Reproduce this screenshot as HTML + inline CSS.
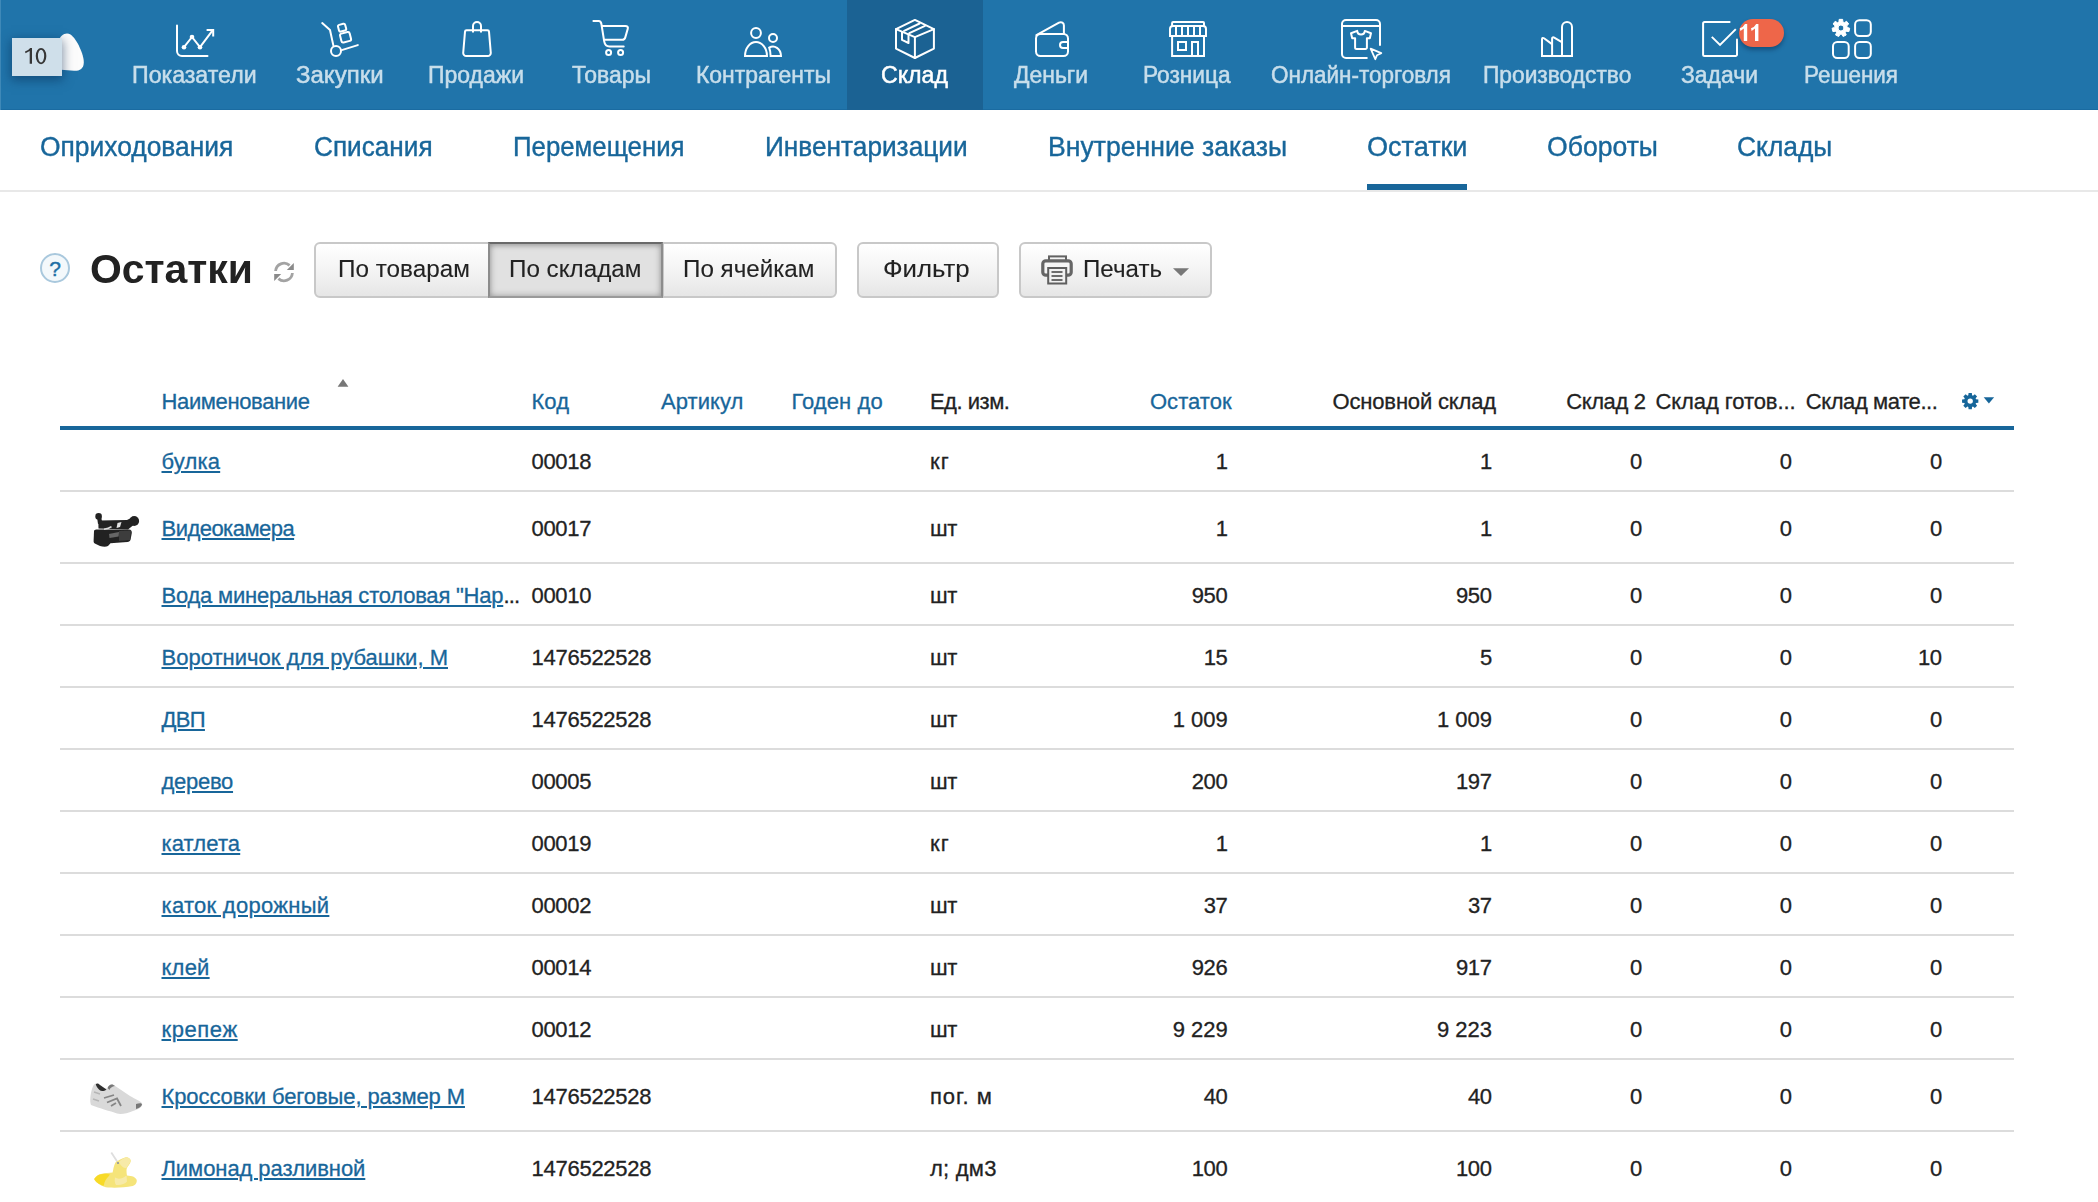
<!DOCTYPE html>
<html lang="ru">
<head>
<meta charset="utf-8">
<title>Остатки</title>
<style>
*{box-sizing:border-box;margin:0;padding:0}
html,body{width:2098px;height:1202px;overflow:hidden;background:#fff}
body{font-family:"Liberation Sans",sans-serif;font-feature-settings:"liga" 0;color:#222;position:relative}
.t{position:absolute;white-space:nowrap;-webkit-text-stroke:0.3px currentColor}
/* top nav */
#top{position:absolute;left:0;top:0;width:2098px;height:110px;background:#2074aa;border-bottom:1px solid #1a6ba1}
#edge{position:absolute;left:0;top:0;width:1px;height:110px;background:#3f89b8}
#act{position:absolute;left:847px;top:0;width:136px;height:110px;background:#1b6293}
#ico{position:absolute;left:0;top:0}
#cnt{position:absolute;left:12px;top:38px;width:50px;height:38px;background:#cfdfea;color:#3a3a3a;font-size:21.5px;line-height:38px;text-align:center;box-shadow:0 3px 10px 1px rgba(5,40,80,.5)}
#cnt svg{display:block}
#badge{position:absolute;left:1739px;top:19px;width:45px;height:28px;border-radius:14px;background:#ee6649;box-shadow:0 3px 4px rgba(0,20,50,.35)}
#bnum{position:absolute;left:1738px;top:18px}
.nv{color:#c8deeb;-webkit-text-stroke:0.5px currentColor}
.nv.on{color:#fff}
/* sub nav */
#subline{position:absolute;left:0;top:190px;width:2098px;height:2px;background:#e8e8e8}
#subul{position:absolute;left:1367px;top:184px;width:100px;height:6px;background:#18669a}
.sb{color:#18669a;-webkit-text-stroke:0.4px currentColor}
/* title row */
#help{position:absolute;left:40px;top:253px;width:30px;height:30px;border:2px solid #a9c8dd;border-radius:50%;color:#1f6fa5;font-size:21px;line-height:27px;-webkit-text-stroke:0.4px #1f6fa5;text-align:center;background:#f3f8fb}
.h1{color:#222;-webkit-text-stroke:0}
.btn{position:absolute;top:242px;height:56px;border:2px solid #c8c8c8;background:linear-gradient(#ffffff 0%,#f4f4f4 50%,#e6e6e6 100%)}
.btn.on{background:#e1e1e1;border-color:#8c8c8c;border-top-color:#6a6a6a;border-bottom-color:#9a9a9a;box-shadow:inset 0 0 7px rgba(0,0,0,.3),inset 0 2px 4px rgba(0,0,0,.12)}
.bt{color:#222;-webkit-text-stroke:0.1px currentColor}
/* table */
.hb{color:#18669a}
.tx{color:#222}
.lk{color:#18669a;text-decoration:underline}
#thl{position:absolute;left:60px;top:426px;width:1954px;height:4px;background:#18669a}
.hl{position:absolute;left:60px;width:1954px;height:2px;background:#dcdcdc}
#misc{position:absolute;left:0;top:0;pointer-events:none}
</style>
</head>
<body>
<div id="top"><div id="edge"></div><div id="act"></div>
<svg id="ico" width="2098" height="110" viewBox="0 0 2098 110" fill="none" stroke="#fff" stroke-width="2" stroke-linecap="round" stroke-linejoin="round">
<!-- egg -->
<path d="M58 42C60 35 66 31.5 70.5 34.5C77 39 84 55 83.8 62.5C83.6 69 79.5 71 74 70.8L58 69.5Z" fill="#fcfcfc" stroke="none"/>
<!-- pokazateli -->
<path d="M177 25.5V51a5 5 0 0 0 5 5H207.5"/>
<path d="M184 47.2L192 37L200 47.2L212.6 30.4"/>
<path d="M206.6 30H213.2V36.6" stroke-linecap="butt" stroke-linejoin="miter"/>
<circle cx="184" cy="47.2" r="2.3" fill="#fff" stroke="none"/><circle cx="192" cy="37" r="2.3" fill="#fff" stroke="none"/><circle cx="200" cy="47.2" r="2.3" fill="#fff" stroke="none"/>
<!-- zakupki -->
<path d="M322.2 23.1L330 30L333.4 45.6"/>
<circle cx="336" cy="51" r="5"/>
<path d="M341.7 50.1L357.8 45.1"/>
<rect x="338.4" y="24.2" width="7.4" height="6.9" rx="1.6" transform="rotate(-15 342.1 27.65)"/>
<rect x="340.6" y="32.7" width="9.9" height="9.1" rx="1.8" transform="rotate(-14 345.55 37.25)"/>
<!-- prodazhi -->
<path d="M466.5 30.2H487.5a1.5 1.5 0 0 1 1.5 1.4L490.8 53a3 3 0 0 1 -3 3H466.2a3 3 0 0 1 -3 -3L465 31.6a1.5 1.5 0 0 1 1.5 -1.4Z"/>
<path d="M473 32.6V26.1a4 4 0 0 1 8 0V32.6" stroke-linecap="butt"/>
<!-- tovary -->
<path d="M593.4 21H598.6C600.6 21 601.2 22.6 601.4 24L604.2 41.3C604.8 45 606.6 46.4 609.5 46.4H623.7"/>
<path d="M602.2 26.1H625.4C627.4 26.1 628.3 27 627.8 28.6L625.2 37.6C624.7 39.2 623.8 39.7 622.4 39.7H604.6"/>
<circle cx="608.6" cy="52.4" r="2.5"/><circle cx="620.6" cy="52.4" r="2.5"/>
<!-- kontragenty -->
<circle cx="756" cy="33" r="4.9"/>
<path d="M745 56A11 14 0 0 1 767 56Z" stroke-linejoin="miter"/>
<circle cx="773" cy="38" r="4"/>
<path d="M770.6 56H781A8 9.8 0 0 0 769.2 47.7C770.2 50.5 770.6 53 770.6 56Z" stroke-linejoin="miter"/>
<!-- sklad -->
<path d="M914.9 19.9L933.9 29.1V48.6L914.9 58L896 48.6V29.1Z"/>
<path d="M896 29.1L914.9 37.2L933.9 29.1M914.9 37.2V58"/>
<path d="M904.1 30.9L919.6 23.5M909.4 33.2L925 25.8"/>
<path d="M902 31.2V39.9L908.5 43V33.6" stroke-linecap="butt"/>
<!-- dengi -->
<rect x="1036" y="34" width="32" height="22" rx="4.5"/>
<path d="M1068 42H1063a3 3 0 0 0 0 6H1068" stroke-linecap="butt"/>
<path d="M1036.4 35.2L1059 22.7C1061.6 21.4 1063.9 23 1063.9 25.6V34"/>
<!-- roznica -->
<path d="M1172.1 26V23a1 1 0 0 1 1 -1H1203a1 1 0 0 1 1 1V26" stroke-linecap="butt"/>
<path d="M1170 36V29a3 3 0 0 1 3 -3H1203a3 3 0 0 1 3 3V36Z" stroke-linejoin="miter"/>
<path d="M1176 26V36M1182 26V36M1188 26V36M1194 26V36M1200 26V36" stroke-linecap="butt"/>
<path d="M1172.1 36V56H1204V36" stroke-linecap="butt" stroke-linejoin="miter"/>
<rect x="1178" y="42" width="8" height="8" stroke-linejoin="miter"/>
<path d="M1192 56V42H1198V56" stroke-linecap="butt" stroke-linejoin="miter"/>
<!-- online -->
<path d="M1366.8 58H1346a4 4 0 0 1 -4 -4V24.1a4 4 0 0 1 4 -4H1376a4 4 0 0 1 4 4V45" />
<path d="M1342 26.1H1380" stroke-linecap="butt"/>
<path d="M1357.2 30.9C1357.6 35.8 1364.4 35.8 1364.8 30.9L1371 33.2L1369.8 38.2H1366.9V47.5a1.5 1.5 0 0 1 -1.5 1.5H1356.6a1.5 1.5 0 0 1 -1.5 -1.5V38.2H1352.2L1351 33.2Z"/>
<path d="M1370.6 48.7L1381.3 53.2L1377 55.2L1375.3 59.2Z" stroke-width="1.8"/>
<!-- proizvodstvo -->
<path d="M1542 56V39.2C1542 37.9 1543 37.6 1544 38.3L1551.3 43.6" />
<path d="M1552.1 56V38.6C1552.1 37.4 1553.2 37 1554.2 37.6L1561.4 41.9" />
<path d="M1562 56V27a5 5 0 0 1 10 0V56" stroke-linecap="butt"/>
<path d="M1541 56H1573" stroke-linecap="butt"/>
<!-- zadachi -->
<path d="M1729.6 22.1H1704.6a1.5 1.5 0 0 0 -1.5 1.5V54.4a1.5 1.5 0 0 0 1.5 1.5H1735.5a1.5 1.5 0 0 0 1.5 -1.5V39.6"/>
<path d="M1711.8 36.9L1720 44.9L1735.8 29.1" stroke-linecap="butt" stroke-linejoin="miter"/>
<!-- resheniya -->
<rect x="1855.1" y="20.2" width="15.7" height="15.7" rx="4.2"/>
<rect x="1833" y="42.1" width="15.7" height="15.9" rx="4.2"/>
<rect x="1855.1" y="42.1" width="15.7" height="15.9" rx="4.2"/>
<path d="M1838.90 22.03 L1839.17 19.37 L1842.63 19.37 L1842.90 22.03 L1844.32 22.71 L1846.57 21.27 L1848.72 23.97 L1846.82 25.84 L1847.17 27.38 L1849.70 28.24 L1848.93 31.60 L1846.28 31.28 L1845.29 32.51 L1846.20 35.03 L1843.09 36.52 L1841.69 34.25 L1840.11 34.25 L1838.71 36.52 L1835.60 35.03 L1836.51 32.51 L1835.52 31.28 L1832.87 31.60 L1832.10 28.24 L1834.63 27.38 L1834.98 25.84 L1833.08 23.97 L1835.23 21.27 L1837.48 22.71Z M1837.90 28.00a3.0 3.0 0 1 0 6.0 0a3.0 3.0 0 1 0 -6.0 0Z" fill="#fff" stroke="#fff" stroke-width="1" stroke-linejoin="round" fill-rule="evenodd"/>
</svg>

<div id="cnt"><svg width="50" height="38" viewBox="12 38 50 38"><path d="M32 48.1V63.8H29.7V51.1L25.5 53.3L25 51.6Q28.6 50.4 30.2 48.1Z" fill="#363636"/><path d="M35.75 56.05a5.3 8.15 0 1 0 10.6 0a5.3 8.15 0 1 0 -10.6 0ZM37.95 56.05a3.1 6.35 0 1 1 6.2 0a3.1 6.35 0 1 1 -6.2 0Z" fill="#363636" fill-rule="evenodd"/></svg></div>
<div id="badge"></div><svg id="bnum" width="30" height="28" viewBox="1738 18 30 28"><path id="one" d="M1747.2 24V40.9H1743.8V28.4L1740.4 30.9L1739.8 28.3Q1743.6 27 1745 24Z" fill="#fff"/><path d="M1758.4 24V40.9H1755V28.4L1751.6 30.9L1751 28.3Q1754.8 27 1756.2 24Z" fill="#fff"/></svg>
</div>
<div id="subline"></div><div id="subul"></div>
<div id="help">?</div>
<div class="btn" style="left:314px;width:176px;border-radius:6px 0 0 6px"></div>
<div class="btn" style="left:662px;width:175px;border-radius:0 6px 6px 0"></div>
<div class="btn on" style="left:488px;width:175px"></div>
<div class="btn" style="left:857px;width:142px;border-radius:6px"></div>
<div class="btn" style="left:1019px;width:193px;border-radius:6px"></div>
<div id="thl"></div>
<div class="hl" style="top:490px"></div><div class="hl" style="top:562px"></div><div class="hl" style="top:624px"></div><div class="hl" style="top:686px"></div><div class="hl" style="top:748px"></div><div class="hl" style="top:810px"></div><div class="hl" style="top:872px"></div><div class="hl" style="top:934px"></div><div class="hl" style="top:996px"></div><div class="hl" style="top:1058px"></div><div class="hl" style="top:1130px"></div>
<div class="t nv" style="left:131.5px;top:60.2px;font-size:23px;line-height:30px;transform:scaleX(1.0062);transform-origin:0 0;">Показатели</div>
<div class="t nv" style="left:295.9px;top:60.2px;font-size:23px;line-height:30px;transform:scaleX(1.0444);transform-origin:0 0;">Закупки</div>
<div class="t nv" style="left:427.5px;top:60.2px;font-size:23px;line-height:30px;transform:scaleX(0.9993);transform-origin:0 0;">Продажи</div>
<div class="t nv" style="left:571.9px;top:60.2px;font-size:23px;line-height:30px;transform:scaleX(0.9972);transform-origin:0 0;">Товары</div>
<div class="t nv" style="left:695.9px;top:60.2px;font-size:23px;line-height:30px;transform:scaleX(0.9959);transform-origin:0 0;">Контрагенты</div>
<div class="t nv on" style="left:881.2px;top:60.2px;font-size:23px;line-height:30px;transform:scaleX(1.0048);transform-origin:0 0;">Склад</div>
<div class="t nv" style="left:1013.5px;top:60.2px;font-size:23px;line-height:30px;transform:scaleX(0.9960);transform-origin:0 0;">Деньги</div>
<div class="t nv" style="left:1142.5px;top:60.2px;font-size:23px;line-height:30px;transform:scaleX(0.9850);transform-origin:0 0;">Розница</div>
<div class="t nv" style="left:1270.9px;top:60.2px;font-size:23px;line-height:30px;transform:scaleX(0.9771);transform-origin:0 0;">Онлайн-торговля</div>
<div class="t nv" style="left:1482.5px;top:60.2px;font-size:23px;line-height:30px;transform:scaleX(0.9889);transform-origin:0 0;">Производство</div>
<div class="t nv" style="left:1681.0px;top:60.2px;font-size:23px;line-height:30px;transform:scaleX(0.9970);transform-origin:0 0;">Задачи</div>
<div class="t nv" style="left:1803.5px;top:60.2px;font-size:23px;line-height:30px;transform:scaleX(0.9754);transform-origin:0 0;">Решения</div>
<div class="t sb" style="left:40.2px;top:128.7px;font-size:27.5px;line-height:36px;transform:scaleX(0.9600);transform-origin:0 0;">Оприходования</div>
<div class="t sb" style="left:314.0px;top:128.7px;font-size:27.5px;line-height:36px;transform:scaleX(0.9518);transform-origin:0 0;">Списания</div>
<div class="t sb" style="left:512.7px;top:128.7px;font-size:27.5px;line-height:36px;transform:scaleX(0.9382);transform-origin:0 0;">Перемещения</div>
<div class="t sb" style="left:764.7px;top:128.7px;font-size:27.5px;line-height:36px;transform:scaleX(0.9540);transform-origin:0 0;">Инвентаризации</div>
<div class="t sb" style="left:1047.9px;top:128.7px;font-size:27.5px;line-height:36px;transform:scaleX(0.9679);transform-origin:0 0;">Внутренние заказы</div>
<div class="t sb" style="left:1366.5px;top:128.7px;font-size:27.5px;line-height:36px;transform:scaleX(0.9842);transform-origin:0 0;">Остатки</div>
<div class="t sb" style="left:1546.6px;top:128.7px;font-size:27.5px;line-height:36px;transform:scaleX(0.9662);transform-origin:0 0;">Обороты</div>
<div class="t sb" style="left:1737.0px;top:128.7px;font-size:27.5px;line-height:36px;transform:scaleX(0.9591);transform-origin:0 0;">Склады</div>
<div class="t h1" style="left:90.4px;top:243.2px;font-size:41px;line-height:53px;transform:scaleX(0.9976);transform-origin:0 0;font-weight:700;">Остатки</div>
<div class="t bt" style="left:338.2px;top:253.4px;font-size:24.3px;line-height:32px;transform:scaleX(0.9994);transform-origin:0 0;">По товарам</div>
<div class="t bt" style="left:508.5px;top:253.4px;font-size:24.3px;line-height:32px;transform:scaleX(0.9972);transform-origin:0 0;">По складам</div>
<div class="t bt" style="left:683.2px;top:253.4px;font-size:24.3px;line-height:32px;transform:scaleX(0.9953);transform-origin:0 0;">По ячейкам</div>
<div class="t bt" style="left:883.4px;top:253.4px;font-size:24.3px;line-height:32px;transform:scaleX(1.0622);transform-origin:0 0;">Фильтр</div>
<div class="t bt" style="left:1082.8px;top:253.4px;font-size:24.3px;line-height:32px;transform:scaleX(0.9925);transform-origin:0 0;">Печать</div>
<div class="t hb" style="left:161.5px;top:386.8px;font-size:22px;line-height:29px;letter-spacing:-0.37px;">Наименование</div>
<div class="t hb" style="left:531.5px;top:386.8px;font-size:22px;line-height:29px;letter-spacing:0.05px;">Код</div>
<div class="t hb" style="left:660.9px;top:386.8px;font-size:22px;line-height:29px;letter-spacing:0.08px;">Артикул</div>
<div class="t hb" style="left:791.5px;top:386.8px;font-size:22px;line-height:29px;letter-spacing:0.08px;">Годен до</div>
<div class="t tx" style="left:929.9px;top:386.8px;font-size:22px;line-height:29px;letter-spacing:-0.47px;">Ед. изм.</div>
<div class="t hb" style="left:1149.9px;top:386.8px;font-size:22px;line-height:29px;letter-spacing:0.07px;">Остаток</div>
<div class="t tx" style="left:1332.5px;top:386.8px;font-size:22px;line-height:29px;letter-spacing:-0.16px;">Основной склад</div>
<div class="t tx" style="left:1566.2px;top:386.8px;font-size:22px;line-height:29px;letter-spacing:-0.39px;">Склад 2</div>
<div class="t tx" style="left:1655.4px;top:386.8px;font-size:22px;line-height:29px;letter-spacing:-0.07px;">Склад готов...</div>
<div class="t tx" style="left:1805.7px;top:386.8px;font-size:22px;line-height:29px;letter-spacing:-0.40px;">Склад мате...</div>
<div class="t lk" style="left:161.5px;top:446.7px;font-size:22px;line-height:29px;letter-spacing:0.17px;">булка</div>
<div class="t tx" style="left:531.5px;top:446.7px;font-size:22px;line-height:29px;letter-spacing:-0.30px;">00018</div>
<div class="t tx" style="left:929.9px;top:446.7px;font-size:22px;line-height:29px;letter-spacing:1.20px;">кг</div>
<div class="t tx" style="left:1215.7px;top:446.7px;font-size:22px;line-height:29px;">1</div>
<div class="t tx" style="left:1479.9px;top:446.7px;font-size:22px;line-height:29px;">1</div>
<div class="t tx" style="left:1629.9px;top:446.7px;font-size:22px;line-height:29px;">0</div>
<div class="t tx" style="left:1779.7px;top:446.7px;font-size:22px;line-height:29px;">0</div>
<div class="t tx" style="left:1929.9px;top:446.7px;font-size:22px;line-height:29px;">0</div>
<div class="t lk" style="left:161.5px;top:513.7px;font-size:22px;line-height:29px;letter-spacing:-0.53px;">Видеокамера</div>
<div class="t tx" style="left:531.5px;top:513.7px;font-size:22px;line-height:29px;letter-spacing:-0.30px;">00017</div>
<div class="t tx" style="left:929.9px;top:513.7px;font-size:22px;line-height:29px;letter-spacing:-0.23px;">шт</div>
<div class="t tx" style="left:1215.7px;top:513.7px;font-size:22px;line-height:29px;">1</div>
<div class="t tx" style="left:1479.9px;top:513.7px;font-size:22px;line-height:29px;">1</div>
<div class="t tx" style="left:1629.9px;top:513.7px;font-size:22px;line-height:29px;">0</div>
<div class="t tx" style="left:1779.7px;top:513.7px;font-size:22px;line-height:29px;">0</div>
<div class="t tx" style="left:1929.9px;top:513.7px;font-size:22px;line-height:29px;">0</div>
<div class="t lk" style="left:161.5px;top:580.7px;font-size:22px;line-height:29px;letter-spacing:-0.22px;">Вода минеральная столовая "Нар</div>
<div class="t tx" style="left:503.4px;top:580.7px;font-size:22px;line-height:29px;letter-spacing:-0.87px;">...</div>
<div class="t tx" style="left:531.5px;top:580.7px;font-size:22px;line-height:29px;letter-spacing:-0.30px;">00010</div>
<div class="t tx" style="left:929.9px;top:580.7px;font-size:22px;line-height:29px;letter-spacing:-0.23px;">шт</div>
<div class="t tx" style="left:1191.7px;top:580.7px;font-size:22px;line-height:29px;letter-spacing:-0.36px;">950</div>
<div class="t tx" style="left:1455.9px;top:580.7px;font-size:22px;line-height:29px;letter-spacing:-0.36px;">950</div>
<div class="t tx" style="left:1629.9px;top:580.7px;font-size:22px;line-height:29px;">0</div>
<div class="t tx" style="left:1779.7px;top:580.7px;font-size:22px;line-height:29px;">0</div>
<div class="t tx" style="left:1929.9px;top:580.7px;font-size:22px;line-height:29px;">0</div>
<div class="t lk" style="left:161.5px;top:642.7px;font-size:22px;line-height:29px;letter-spacing:0.01px;">Воротничок для рубашки, М</div>
<div class="t tx" style="left:531.5px;top:642.7px;font-size:22px;line-height:29px;letter-spacing:-0.26px;">1476522528</div>
<div class="t tx" style="left:929.9px;top:642.7px;font-size:22px;line-height:29px;letter-spacing:-0.23px;">шт</div>
<div class="t tx" style="left:1203.7px;top:642.7px;font-size:22px;line-height:29px;letter-spacing:-0.48px;">15</div>
<div class="t tx" style="left:1479.9px;top:642.7px;font-size:22px;line-height:29px;">5</div>
<div class="t tx" style="left:1629.9px;top:642.7px;font-size:22px;line-height:29px;">0</div>
<div class="t tx" style="left:1779.7px;top:642.7px;font-size:22px;line-height:29px;">0</div>
<div class="t tx" style="left:1917.9px;top:642.7px;font-size:22px;line-height:29px;letter-spacing:-0.48px;">10</div>
<div class="t lk" style="left:161.5px;top:704.7px;font-size:22px;line-height:29px;letter-spacing:-0.65px;">ДВП</div>
<div class="t tx" style="left:531.5px;top:704.7px;font-size:22px;line-height:29px;letter-spacing:-0.26px;">1476522528</div>
<div class="t tx" style="left:929.9px;top:704.7px;font-size:22px;line-height:29px;letter-spacing:-0.23px;">шт</div>
<div class="t tx" style="left:1172.8px;top:704.7px;font-size:22px;line-height:29px;letter-spacing:-0.04px;">1 009</div>
<div class="t tx" style="left:1437.0px;top:704.7px;font-size:22px;line-height:29px;letter-spacing:-0.04px;">1 009</div>
<div class="t tx" style="left:1629.9px;top:704.7px;font-size:22px;line-height:29px;">0</div>
<div class="t tx" style="left:1779.7px;top:704.7px;font-size:22px;line-height:29px;">0</div>
<div class="t tx" style="left:1929.9px;top:704.7px;font-size:22px;line-height:29px;">0</div>
<div class="t lk" style="left:161.5px;top:766.7px;font-size:22px;line-height:29px;letter-spacing:-0.28px;">дерево</div>
<div class="t tx" style="left:531.5px;top:766.7px;font-size:22px;line-height:29px;letter-spacing:-0.30px;">00005</div>
<div class="t tx" style="left:929.9px;top:766.7px;font-size:22px;line-height:29px;letter-spacing:-0.23px;">шт</div>
<div class="t tx" style="left:1191.7px;top:766.7px;font-size:22px;line-height:29px;letter-spacing:-0.36px;">200</div>
<div class="t tx" style="left:1455.9px;top:766.7px;font-size:22px;line-height:29px;letter-spacing:-0.36px;">197</div>
<div class="t tx" style="left:1629.9px;top:766.7px;font-size:22px;line-height:29px;">0</div>
<div class="t tx" style="left:1779.7px;top:766.7px;font-size:22px;line-height:29px;">0</div>
<div class="t tx" style="left:1929.9px;top:766.7px;font-size:22px;line-height:29px;">0</div>
<div class="t lk" style="left:161.5px;top:828.7px;font-size:22px;line-height:29px;letter-spacing:0.12px;">катлета</div>
<div class="t tx" style="left:531.5px;top:828.7px;font-size:22px;line-height:29px;letter-spacing:-0.30px;">00019</div>
<div class="t tx" style="left:929.9px;top:828.7px;font-size:22px;line-height:29px;letter-spacing:1.20px;">кг</div>
<div class="t tx" style="left:1215.7px;top:828.7px;font-size:22px;line-height:29px;">1</div>
<div class="t tx" style="left:1479.9px;top:828.7px;font-size:22px;line-height:29px;">1</div>
<div class="t tx" style="left:1629.9px;top:828.7px;font-size:22px;line-height:29px;">0</div>
<div class="t tx" style="left:1779.7px;top:828.7px;font-size:22px;line-height:29px;">0</div>
<div class="t tx" style="left:1929.9px;top:828.7px;font-size:22px;line-height:29px;">0</div>
<div class="t lk" style="left:161.5px;top:890.7px;font-size:22px;line-height:29px;letter-spacing:0.28px;">каток дорожный</div>
<div class="t tx" style="left:531.5px;top:890.7px;font-size:22px;line-height:29px;letter-spacing:-0.30px;">00002</div>
<div class="t tx" style="left:929.9px;top:890.7px;font-size:22px;line-height:29px;letter-spacing:-0.23px;">шт</div>
<div class="t tx" style="left:1203.7px;top:890.7px;font-size:22px;line-height:29px;letter-spacing:-0.48px;">37</div>
<div class="t tx" style="left:1467.9px;top:890.7px;font-size:22px;line-height:29px;letter-spacing:-0.48px;">37</div>
<div class="t tx" style="left:1629.9px;top:890.7px;font-size:22px;line-height:29px;">0</div>
<div class="t tx" style="left:1779.7px;top:890.7px;font-size:22px;line-height:29px;">0</div>
<div class="t tx" style="left:1929.9px;top:890.7px;font-size:22px;line-height:29px;">0</div>
<div class="t lk" style="left:161.5px;top:952.7px;font-size:22px;line-height:29px;letter-spacing:0.22px;">клей</div>
<div class="t tx" style="left:531.5px;top:952.7px;font-size:22px;line-height:29px;letter-spacing:-0.30px;">00014</div>
<div class="t tx" style="left:929.9px;top:952.7px;font-size:22px;line-height:29px;letter-spacing:-0.23px;">шт</div>
<div class="t tx" style="left:1191.7px;top:952.7px;font-size:22px;line-height:29px;letter-spacing:-0.36px;">926</div>
<div class="t tx" style="left:1455.9px;top:952.7px;font-size:22px;line-height:29px;letter-spacing:-0.36px;">917</div>
<div class="t tx" style="left:1629.9px;top:952.7px;font-size:22px;line-height:29px;">0</div>
<div class="t tx" style="left:1779.7px;top:952.7px;font-size:22px;line-height:29px;">0</div>
<div class="t tx" style="left:1929.9px;top:952.7px;font-size:22px;line-height:29px;">0</div>
<div class="t lk" style="left:161.5px;top:1014.7px;font-size:22px;line-height:29px;letter-spacing:0.58px;">крепеж</div>
<div class="t tx" style="left:531.5px;top:1014.7px;font-size:22px;line-height:29px;letter-spacing:-0.30px;">00012</div>
<div class="t tx" style="left:929.9px;top:1014.7px;font-size:22px;line-height:29px;letter-spacing:-0.23px;">шт</div>
<div class="t tx" style="left:1172.8px;top:1014.7px;font-size:22px;line-height:29px;letter-spacing:-0.04px;">9 229</div>
<div class="t tx" style="left:1437.0px;top:1014.7px;font-size:22px;line-height:29px;letter-spacing:-0.04px;">9 223</div>
<div class="t tx" style="left:1629.9px;top:1014.7px;font-size:22px;line-height:29px;">0</div>
<div class="t tx" style="left:1779.7px;top:1014.7px;font-size:22px;line-height:29px;">0</div>
<div class="t tx" style="left:1929.9px;top:1014.7px;font-size:22px;line-height:29px;">0</div>
<div class="t lk" style="left:161.5px;top:1081.7px;font-size:22px;line-height:29px;letter-spacing:-0.10px;">Кроссовки беговые, размер М</div>
<div class="t tx" style="left:531.5px;top:1081.7px;font-size:22px;line-height:29px;letter-spacing:-0.26px;">1476522528</div>
<div class="t tx" style="left:929.9px;top:1081.7px;font-size:22px;line-height:29px;letter-spacing:1.03px;">пог. м</div>
<div class="t tx" style="left:1203.7px;top:1081.7px;font-size:22px;line-height:29px;letter-spacing:-0.48px;">40</div>
<div class="t tx" style="left:1467.9px;top:1081.7px;font-size:22px;line-height:29px;letter-spacing:-0.48px;">40</div>
<div class="t tx" style="left:1629.9px;top:1081.7px;font-size:22px;line-height:29px;">0</div>
<div class="t tx" style="left:1779.7px;top:1081.7px;font-size:22px;line-height:29px;">0</div>
<div class="t tx" style="left:1929.9px;top:1081.7px;font-size:22px;line-height:29px;">0</div>
<div class="t lk" style="left:161.5px;top:1153.7px;font-size:22px;line-height:29px;letter-spacing:-0.07px;">Лимонад разливной</div>
<div class="t tx" style="left:531.5px;top:1153.7px;font-size:22px;line-height:29px;letter-spacing:-0.26px;">1476522528</div>
<div class="t tx" style="left:929.9px;top:1153.7px;font-size:22px;line-height:29px;letter-spacing:0.25px;">л; дм3</div>
<div class="t tx" style="left:1191.7px;top:1153.7px;font-size:22px;line-height:29px;letter-spacing:-0.36px;">100</div>
<div class="t tx" style="left:1455.9px;top:1153.7px;font-size:22px;line-height:29px;letter-spacing:-0.36px;">100</div>
<div class="t tx" style="left:1629.9px;top:1153.7px;font-size:22px;line-height:29px;">0</div>
<div class="t tx" style="left:1779.7px;top:1153.7px;font-size:22px;line-height:29px;">0</div>
<div class="t tx" style="left:1929.9px;top:1153.7px;font-size:22px;line-height:29px;">0</div>
<svg id="misc" width="2098" height="1202" viewBox="0 0 2098 1202" fill="none">
<defs>
<filter id="b5" x="-20%" y="-20%" width="140%" height="140%"><feGaussianBlur stdDeviation="0.55"/></filter>
<filter id="b8" x="-20%" y="-20%" width="140%" height="140%"><feGaussianBlur stdDeviation="0.7"/></filter>
</defs>
<!-- refresh -->
<g filter="url(#b5)" stroke="#a3a3a3" stroke-width="2.8" fill="none">
<path d="M275.6 271A8.4 8.4 0 0 1 289.6 265.4"/>
<path d="M292.4 273A8.4 8.4 0 0 1 278.4 278.6"/>
<path d="M293.8 263V270H286.8Z" fill="#8a8a8a" stroke="none"/>
<path d="M274.2 281V274H281.2Z" fill="#8a8a8a" stroke="none"/>
</g>
<!-- printer -->
<g filter="url(#b5)">
<rect x="1049" y="256.4" width="17" height="5" fill="#f4f4f4" stroke="#626262" stroke-width="2"/>
<rect x="1042.8" y="260.8" width="28.4" height="14.4" rx="3" fill="#f6f6f6" stroke="#666" stroke-width="3.2"/>
<rect x="1048.2" y="268" width="18" height="15.5" fill="#f1f1f1" stroke="#5f5f5f" stroke-width="2"/>
<path d="M1051.5 272H1062.5M1051.5 276H1062.5M1051.5 280H1062.5" stroke="#6c6c6c" stroke-width="1.9"/>
</g>
<path d="M1173 268.3H1189L1181 276Z" fill="#777"/>
<!-- sort arrow -->
<path d="M343 379L348.4 386.8H337.6Z" fill="#777" filter="url(#b5)"/>
<!-- table gear -->
<g filter="url(#b5)">
<path d="M1968.31 395.30 L1968.58 392.96 L1971.82 392.96 L1972.09 395.30 L1972.97 395.66 L1974.81 394.20 L1977.10 396.49 L1975.64 398.33 L1976.00 399.21 L1978.34 399.48 L1978.34 402.72 L1976.00 402.99 L1975.64 403.87 L1977.10 405.71 L1974.81 408.00 L1972.97 406.54 L1972.09 406.90 L1971.82 409.24 L1968.58 409.24 L1968.31 406.90 L1967.43 406.54 L1965.59 408.00 L1963.30 405.71 L1964.76 403.87 L1964.40 402.99 L1962.06 402.72 L1962.06 399.48 L1964.40 399.21 L1964.76 398.33 L1963.30 396.49 L1965.59 394.20 L1967.43 395.66Z M1967.50 401.10a2.7 2.7 0 1 0 5.4 0a2.7 2.7 0 1 0 -5.4 0Z" fill="#18669a" fill-rule="evenodd"/>
<path d="M1983.7 397.2H1994.1L1988.9 403.4Z" fill="#18669a"/>
</g>
<!-- camera -->
<g filter="url(#b8)" fill="#242424">
<circle cx="98.6" cy="516.4" r="3.3"/>
<path d="M97 517L101 517L102.5 523L98 524Z"/>
<path d="M98.3 520.6L127 520L131 518L136 523L128 529.5L98.5 528.5Z"/>
<circle cx="134.2" cy="521" r="4.9"/>
<path d="M94 531.5C94 530.3 95 529.6 96.3 529.6H129C131 529.6 132 531 131.8 533L130.6 539.5C130.3 541 129 541.8 127.4 542L110.5 543.2L108 546C106 547 103 546.8 100 546L94.8 543.4C94 543 93.6 542 93.6 541Z"/>
<path d="M104 529.2C108 528.8 110 527.8 111.5 526.6" stroke="#ddd" stroke-width="1.6" fill="none"/>
<path d="M117.5 523L121.5 522L120 527L116.6 528Z" fill="#e4e4e4"/>
<path d="M109 534L119 532L118.6 536.5L109.5 538Z" fill="#666"/>
<path d="M119 531L131 530.5L130 540L119 541Z" fill="#3c3c3c"/>
</g>
<!-- shoe -->
<g filter="url(#b8)">
<path d="M95.5 1083.5C99 1087 103 1090 108 1088C109 1085 111 1083.5 113 1084.5L130 1096C135 1099 142 1101.5 142.2 1104C142.4 1107 139 1109 133 1111C127 1113.5 121 1114.5 117 1113.5C110 1111 100 1108.5 91 1105C89.5 1101 90.5 1094 92 1089C93 1086 94 1084 95.5 1083.5Z" fill="#d9d9d9"/>
<path d="M95.8 1084C97 1083 99 1083.5 100 1085L106.5 1089.5C104 1091.5 101 1091.5 99.5 1090C97.5 1088 96 1086 95.8 1084Z" fill="#2f2f2f"/>
<path d="M107.5 1088C108.5 1085.5 110.5 1084 112.5 1084.5L115 1086C112 1086.5 110 1088 109.5 1090Z" fill="#777"/>
<path d="M104 1098L114 1095M107 1102.5L117 1098.5L121 1106M111 1106L116 1103" stroke="#858585" stroke-width="1.8" fill="none"/>
<path d="M136 1104C139 1103 141.5 1102.5 142 1104.5C141.5 1107 139 1108 136 1109Z" fill="#777"/>
<path d="M94 1092L100 1094M93 1099L99 1101" stroke="#b5b5b5" stroke-width="1.5"/>
</g>
<!-- lemon -->
<g filter="url(#b8)">
<path d="M111.3 1152.6L117.8 1162.6" stroke="#dedede" stroke-width="1.8"/>
<path d="M94 1179.1C96 1176 98.5 1174.4 101 1174C105 1173 109 1173 112.6 1172.6C113 1171 113.2 1169.5 113.5 1168C114 1166 114.5 1164 115.4 1162.4C118 1160.5 122 1158 125.7 1157.2C128.5 1157 131 1159 130.8 1161C130.6 1164 127.5 1166 126.6 1168.9C126.4 1171 126.6 1173.5 127 1175.4C129.5 1175.5 131.5 1176 133.6 1176.8C135.5 1178 137 1179.5 136.8 1181C136.6 1183.5 135 1185.3 132.7 1186.1C125 1187.6 116 1187.9 108 1187.5C105 1187.2 102 1186 100 1184.7C97.5 1183.2 95 1181.5 94 1179.1Z" fill="#f5e47a"/>
<path d="M94.3 1179.1C96 1176.2 98.5 1174.6 101 1174.2C104 1173.6 107.5 1173.4 110 1174.5C108 1177 105.5 1179.5 104.5 1182.5C104 1184 104.3 1185 103.5 1185.8C101.5 1185.5 99 1184 97.5 1182.8C96 1181.8 95 1180.6 94.3 1179.1Z" fill="#f8da25"/>
<path d="M119 1162C121 1159.5 124 1158 126 1157.6C128.5 1157.4 130.6 1159 130.4 1161C130.2 1163.5 127.5 1165.5 126.4 1168C124 1168.5 121 1166.5 119 1162Z" fill="#f7eaa8"/>
<path d="M115 1177.5C118 1179.5 122 1179 126.5 1175.5L127 1181.5C125 1184 121 1185.5 116 1185C114.5 1182.5 114.5 1180 115 1177.5Z" fill="#f7eaa8"/>
<circle cx="118" cy="1163" r="1.1" fill="#8a8fa0"/>
</g>
</svg>


</body>
</html>
